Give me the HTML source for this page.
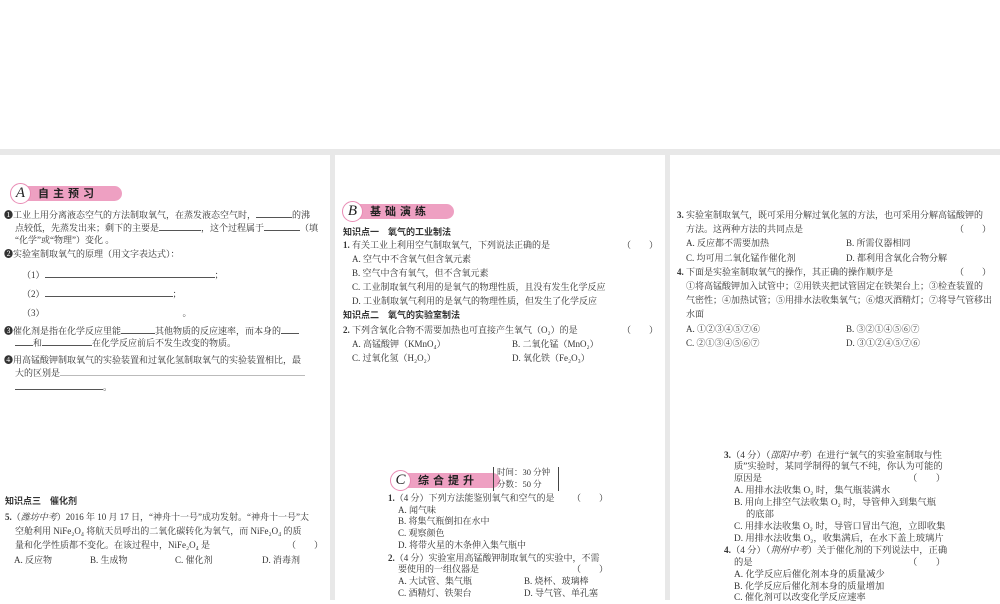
<!DOCTYPE html>
<html><head><meta charset="utf-8"><style>
*{margin:0;padding:0;box-sizing:border-box}
body{width:1000px;height:600px;position:relative;background:#fff;overflow:hidden;font-family:"Liberation Serif","Noto Serif CJK SC","Noto Sans CJK SC",serif;color:#333}
.g{position:absolute;background:#e8e8e8}
.t{position:absolute;font-size:9px;line-height:12px;white-space:nowrap}
.br .t{font-size:9.3px}
.b{font-weight:bold;font-family:"Liberation Sans","Noto Sans CJK SC",sans-serif}
.u{display:inline-block;border-bottom:1px solid #555;height:9px;vertical-align:baseline}
.badge{position:absolute;height:20px}
.badge .bar{position:absolute;left:12px;top:3px;height:15px;background:#eea0c2;border-radius:3px 8px 8px 3px;font-family:"Noto Sans CJK SC",sans-serif;font-weight:bold;font-size:11px;line-height:15px;padding-left:16px;letter-spacing:4px;color:#222}
.badge .c{position:absolute;left:0;top:0;width:21px;height:21px;border-radius:50%;background:#fff;border:1.5px solid #e98bb4;font-family:"Liberation Serif",serif;font-style:italic;font-size:15px;line-height:18px;text-align:center;color:#222}
</style></head><body>
<div class="g" style="left:0;top:149px;width:1000px;height:6px"></div>
<div class="g" style="left:330px;top:149px;width:5px;height:451px"></div>
<div class="g" style="left:665px;top:149px;width:5px;height:451px"></div>

<!-- Panel 1 -->
<div class="badge" style="left:10px;top:183px;width:105px"><div class="bar" style="width:100px">自主预习</div><div class="c">A</div></div>
<div class="t" style="left:4px;top:209px">❶工业上用分离液态空气的方法制取氧气，在蒸发液态空气时，<span class="u" style="width:36px"></span>的沸</div>
<div class="t" style="left:15px;top:222px">点较低，先蒸发出来；剩下的主要是<span class="u" style="width:42px"></span>，这个过程属于<span class="u" style="width:36px"></span>（填</div>
<div class="t" style="left:15px;top:234px">“化学”或“物理”）变化 。</div>
<div class="t" style="left:4px;top:248px">❷实验室制取氧气的原理（用文字表达式）：</div>
<div class="t" style="left:22px;top:269px">（1）<span class="u" style="width:170px"></span>；</div>
<div class="t" style="left:22px;top:288px">（2）<span class="u" style="width:128px"></span>；</div>
<div class="t" style="left:22px;top:307px">（3）<span class="u" style="width:138px;border:none"></span>。</div>
<div class="t" style="left:4px;top:325px">❸催化剂是指在化学反应里能<span class="u" style="width:34px"></span>其他物质的反应速率，而本身的<span class="u" style="width:18px"></span></div>
<div class="t" style="left:15px;top:337px"><span class="u" style="width:18px"></span>和<span class="u" style="width:50px"></span>在化学反应前后不发生改变的物质。</div>
<div class="t" style="left:4px;top:354px">❹用高锰酸钾制取氧气的实验装置和过氧化氢制取氧气的实验装置相比，最</div>
<div class="t" style="left:15px;top:367px">大的区别是<span class="u" style="width:245px;border-color:#bbb"></span></div>
<div class="t" style="left:15px;top:381px"><span class="u" style="width:88px"></span>。</div>

<!-- Panel 2 -->
<div class="badge" style="left:342px;top:201px;width:110px"><div class="bar" style="width:100px">基础演练</div><div class="c">B</div></div>
<div class="t b" style="left:343px;top:226px">知识点一　氧气的工业制法</div>
<div class="t" style="left:343px;top:239px"><b>1.</b> 有关工业上利用空气制取氧气，下列说法正确的是</div>
<div class="t" style="left:622px;top:239px">（　　）</div>
<div class="t" style="left:352px;top:253px">A. 空气中不含氧气但含氧元素</div>
<div class="t" style="left:352px;top:267px">B. 空气中含有氧气，但不含氧元素</div>
<div class="t" style="left:352px;top:281px">C. 工业制取氧气利用的是氧气的物理性质，且没有发生化学反应</div>
<div class="t" style="left:352px;top:295px">D. 工业制取氧气利用的是氧气的物理性质，但发生了化学反应</div>
<div class="t b" style="left:343px;top:309px">知识点二　氧气的实验室制法</div>
<div class="t" style="left:343px;top:324px"><b>2.</b> 下列含氧化合物不需要加热也可直接产生氧气（O₂）的是</div>
<div class="t" style="left:622px;top:324px">（　　）</div>
<div class="t" style="left:352px;top:338px">A. 高锰酸钾（KMnO₄）</div>
<div class="t" style="left:512px;top:338px">B. 二氧化锰（MnO₂）</div>
<div class="t" style="left:352px;top:352px">C. 过氧化氢（H₂O₂）</div>
<div class="t" style="left:512px;top:352px">D. 氧化铁（Fe₂O₃）</div>

<!-- Panel 3 -->
<div class="t" style="left:677px;top:209px"><b>3.</b> 实验室制取氧气，既可采用分解过氧化氢的方法，也可采用分解高锰酸钾的</div>
<div class="t" style="left:686px;top:223px">方法。这两种方法的共同点是</div>
<div class="t" style="left:955px;top:223px">（　　）</div>
<div class="t" style="left:686px;top:237px">A. 反应都不需要加热</div>
<div class="t" style="left:846px;top:237px">B. 所需仪器相同</div>
<div class="t" style="left:686px;top:252px">C. 均可用二氧化锰作催化剂</div>
<div class="t" style="left:846px;top:252px">D. 都利用含氧化合物分解</div>
<div class="t" style="left:677px;top:266px"><b>4.</b> 下面是实验室制取氧气的操作，其正确的操作顺序是</div>
<div class="t" style="left:955px;top:266px">（　　）</div>
<div class="t" style="left:686px;top:280px">①将高锰酸钾加入试管中；②用铁夹把试管固定在铁架台上；③检查装置的</div>
<div class="t" style="left:686px;top:294px">气密性；④加热试管；⑤用排水法收集氧气；⑥熄灭酒精灯；⑦将导气管移出</div>
<div class="t" style="left:686px;top:308px">水面</div>
<div class="t" style="left:686px;top:323px">A. ①②③④⑤⑦⑥</div>
<div class="t" style="left:846px;top:323px">B. ③②①④⑤⑥⑦</div>
<div class="t" style="left:686px;top:337px">C. ②①③④⑤⑥⑦</div>
<div class="t" style="left:846px;top:337px">D. ③①②④⑤⑦⑥</div>

<!-- Bottom left -->
<div class="t b" style="left:5px;top:495px">知识点三　催化剂</div>
<div class="t" style="left:5px;top:511px"><b>5.</b>（<i>潍坊中考</i>）2016 年 10 月 17 日，“神舟十一号”成功发射。“神舟十一号”太</div>
<div class="t" style="left:15px;top:525px">空舱利用 NiFe₂O₄ 将航天员呼出的二氧化碳转化为氧气，而 NiFe₂O₄ 的质</div>
<div class="t" style="left:15px;top:539px">量和化学性质都不变化。在该过程中，NiFe₂O₄ 是</div>
<div class="t" style="left:287px;top:539px">（　　）</div>
<div class="t" style="left:14px;top:554px">A. 反应物</div>
<div class="t" style="left:90px;top:554px">B. 生成物</div>
<div class="t" style="left:175px;top:554px">C. 催化剂</div>
<div class="t" style="left:262px;top:554px">D. 消毒剂</div>

<!-- Bottom middle -->
<div class="badge" style="left:390px;top:470px;width:102px"><div class="bar" style="width:98px">综合提升</div><div class="c">C</div></div>
<div style="position:absolute;left:493px;top:467px;width:66px;height:24px;border-left:1px solid #444;border-right:1px solid #444"></div>
<div class="t" style="left:497px;top:466px;font-size:8.5px">时间：30 分钟</div>
<div class="t" style="left:497px;top:478px;font-size:8.5px">分数：50 分</div>
<div class="t" style="left:388px;top:492px"><b>1.</b>（4 分）下列方法能鉴别氧气和空气的是</div>
<div class="t" style="left:572px;top:492px">（　　）</div>
<div class="t" style="left:398px;top:504px">A. 闻气味</div>
<div class="t" style="left:398px;top:515px">B. 将集气瓶倒扣在水中</div>
<div class="t" style="left:398px;top:527px">C. 观察颜色</div>
<div class="t" style="left:398px;top:539px">D. 将带火星的木条伸入集气瓶中</div>
<div class="t" style="left:388px;top:552px"><b>2.</b>（4 分）实验室用高锰酸钾制取氧气的实验中，不需</div>
<div class="t" style="left:398px;top:563px">要使用的一组仪器是</div>
<div class="t" style="left:572px;top:563px">（　　）</div>
<div class="t" style="left:398px;top:575px">A. 大试管、集气瓶</div>
<div class="t" style="left:524px;top:575px">B. 烧杯、玻璃棒</div>
<div class="t" style="left:398px;top:587px">C. 酒精灯、铁架台</div>
<div class="t" style="left:524px;top:587px">D. 导气管、单孔塞</div>

<!-- Bottom right -->
<div class="br">
<div class="t" style="left:724px;top:450px"><b>3.</b>（4 分）（<i>邵阳中考</i>）在进行“氧气的实验室制取与性</div>
<div class="t" style="left:734px;top:461px">质”实验时，某同学制得的氧气不纯，你认为可能的</div>
<div class="t" style="left:734px;top:473px">原因是</div>
<div class="t" style="left:908px;top:473px">（　　）</div>
<div class="t" style="left:734px;top:485px">A. 用排水法收集 O₂ 时，集气瓶装满水</div>
<div class="t" style="left:734px;top:497px">B. 用向上排空气法收集 O₂ 时，导管伸入到集气瓶</div>
<div class="t" style="left:746px;top:509px">的底部</div>
<div class="t" style="left:734px;top:521px">C. 用排水法收集 O₂ 时，导管口冒出气泡，立即收集</div>
<div class="t" style="left:734px;top:533px">D. 用排水法收集 O₂，收集满后，在水下盖上玻璃片</div>
<div class="t" style="left:724px;top:545px"><b>4.</b>（4 分）（<i>荆州中考</i>）关于催化剂的下列说法中，正确</div>
<div class="t" style="left:734px;top:557px">的是</div>
<div class="t" style="left:908px;top:557px">（　　）</div>
<div class="t" style="left:734px;top:569px">A. 化学反应后催化剂本身的质量减少</div>
<div class="t" style="left:734px;top:581px">B. 化学反应后催化剂本身的质量增加</div>
<div class="t" style="left:734px;top:592px">C. 催化剂可以改变化学反应速率</div>
</div>
</body></html>
